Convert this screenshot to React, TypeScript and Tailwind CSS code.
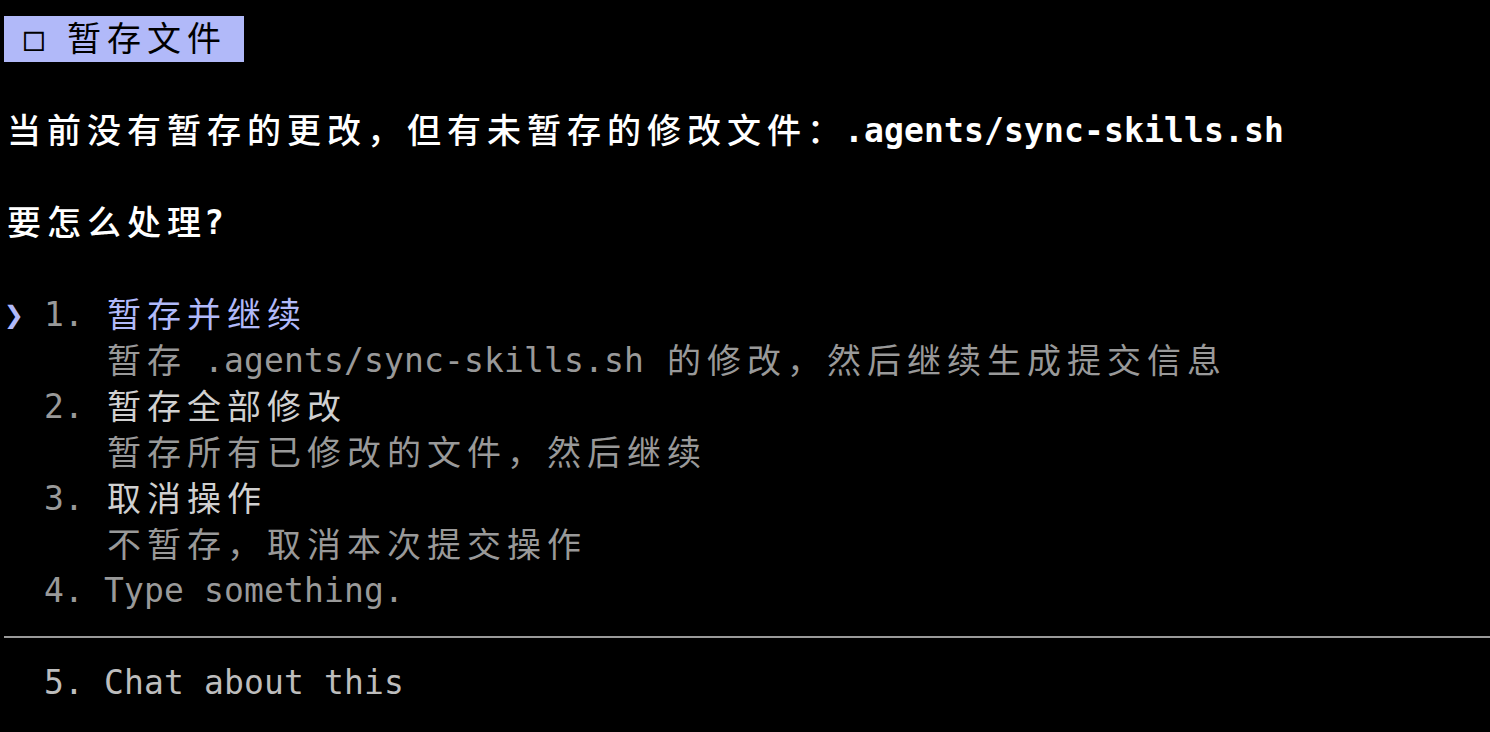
import React from 'react';

// terminal-style grid: 20px per narrow cell, 40px per wide (CJK) cell, 46px rows
const isWide = (ch: string) => {
  const code = ch.codePointAt(0) ?? 0;
  return code >= 0x2e80;
};

interface Seg {
  t: string;
  c?: string;
}

const Cells: React.FC<{ text: string; bold?: boolean }> = ({ text, bold }) => (
  <>
    {Array.from(text).map((ch, i) => {
      const wide = isWide(ch);
      let cls = wide
        ? 'inline-block w-[40px] text-center text-[34px] align-top'
        : 'inline-block w-[20px] text-center align-top';
      if (bold) cls += wide ? ' font-medium' : ' font-bold';
      return (
        <span key={i} className={cls}>
          {ch === ' ' ? '\u00a0' : ch}
        </span>
      );
    })}
  </>
);

const Row: React.FC<{ segs?: Seg[]; bold?: boolean }> = ({ segs = [], bold }) => (
  <div className="h-[46px] leading-[46px] whitespace-nowrap">
    {segs.map((s, i) => (
      <span key={i} className={`inline-block h-[46px] align-top ${s.c ?? ''}`}>
        <Cells text={s.t} bold={bold} />
      </span>
    ))}
  </div>
);

const options = [
  { n: '2', label: '暂存全部修改', desc: '暂存所有已修改的文件，然后继续' },
  { n: '3', label: '取消操作', desc: '不暂存，取消本次提交操作' },
];

export default function App() {
  return (
    <div className="min-h-screen w-full bg-black pt-[16px] pl-[4px] text-[33px] font-['DejaVu_Sans_Mono','Noto_Sans_CJK_SC',monospace] overflow-hidden">
      <Row segs={[{ t: ' □ 暂存文件 ', c: 'bg-[#b1b9f9] text-black' }]} />
      <Row />
      <Row bold segs={[{ t: '当前没有暂存的更改，但有未暂存的修改文件：.agents/sync-skills.sh', c: 'text-white' }]} />
      <Row />
      <Row bold segs={[{ t: '要怎么处理?', c: 'text-white' }]} />
      <Row />
      <Row
        segs={[
          { t: '❯', c: 'text-[#b1b9f9]' },
          { t: ' 1. ', c: 'text-[#999999]' },
          { t: '暂存并继续', c: 'text-[#b1b9f9]' },
        ]}
      />
      <Row segs={[{ t: '     暂存 .agents/sync-skills.sh 的修改，然后继续生成提交信息', c: 'text-[#999999]' }]} />
      {options.map((o) => (
        <React.Fragment key={o.n}>
          <Row
            segs={[
              { t: `  ${o.n}. `, c: 'text-[#999999]' },
              { t: o.label, c: 'text-[#d0d0d0]' },
            ]}
          />
          <Row segs={[{ t: `     ${o.desc}`, c: 'text-[#999999]' }]} />
        </React.Fragment>
      ))}
      <Row segs={[{ t: '  4. Type something.', c: 'text-[#999999]' }]} />
      <div className="h-[46px] pt-[22px]">
        <div className="h-[2px] w-full bg-[#9a9a9a]" />
      </div>
      <Row segs={[{ t: '  5. Chat about this', c: 'text-[#bdbdbd]' }]} />
    </div>
  );
}
